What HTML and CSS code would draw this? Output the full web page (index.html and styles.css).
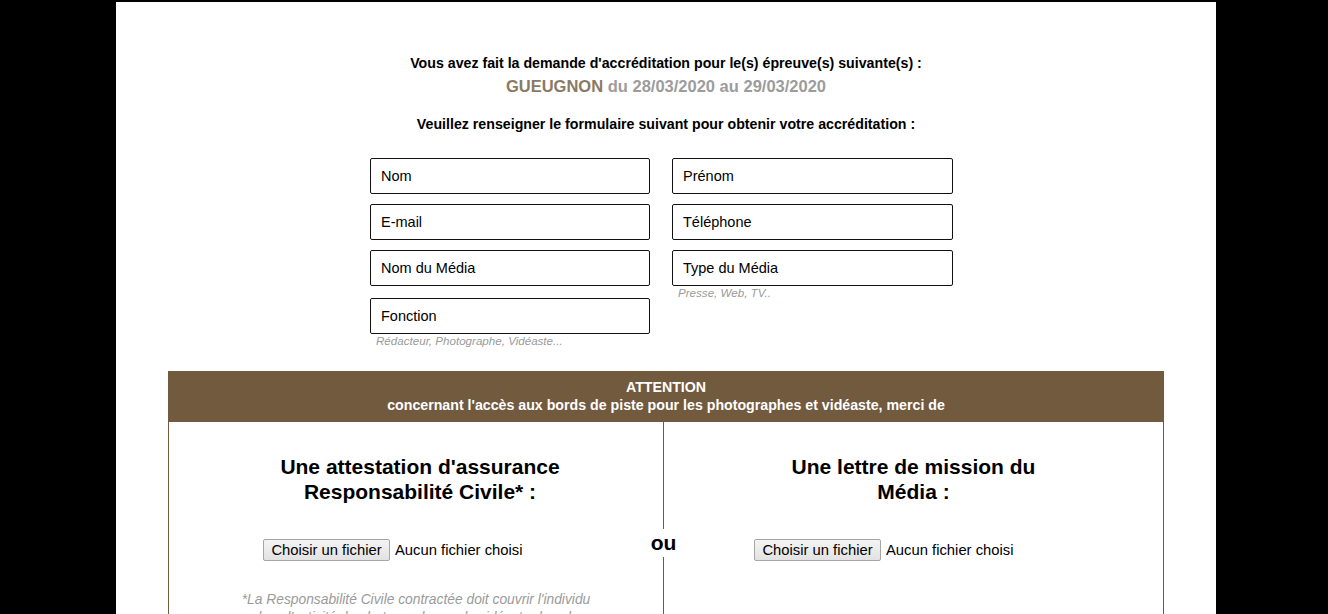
FILE: index.html
```html
<!DOCTYPE html>
<html lang="fr">
<head>
<meta charset="utf-8">
<title>Accréditation</title>
<link rel="stylesheet" href="styles.css">
</head>
<body>
<div class="panel">
  <div class="intro">
    <p class="intro-line">Vous avez fait la demande d'accréditation pour le(s) épreuve(s) suivante(s) :</p>
    <p class="event"><span class="event-name">GUEUGNON</span> du 28/03/2020 au 29/03/2020</p>
    <p class="intro-line intro-second">Veuillez renseigner le formulaire suivant pour obtenir votre accréditation :</p>
  </div>

  <form class="form-grid">
    <div class="field"><input class="text-input" type="text" placeholder="Nom"></div>
    <div class="field"><input class="text-input" type="text" placeholder="Prénom"></div>
    <div class="field"><input class="text-input" type="text" placeholder="E-mail"></div>
    <div class="field"><input class="text-input" type="text" placeholder="Téléphone"></div>
    <div class="field"><input class="text-input" type="text" placeholder="Nom du Média"></div>
    <div class="field"><input class="text-input" type="text" placeholder="Type du Média"><div class="hint">Presse, Web, TV..</div></div>
    <div class="field"><input class="text-input" type="text" placeholder="Fonction"><div class="hint">Rédacteur, Photographe, Vidéaste...</div></div>
  </form>

  <div class="notice">
    <div class="notice-head">
      <div>ATTENTION</div>
      <div>concernant l'accès aux bords de piste pour les photographes et vidéaste, merci de</div>
    </div>
    <div class="notice-body">
      <div class="doc-col doc-col-left">
        <h2 class="doc-title">Une attestation d'assurance Responsabilité Civile* :</h2>
        <div class="file-row">
          <div class="file-ctrl"><span class="file-btn">Choisir un fichier</span><span class="file-name">Aucun fichier choisi</span></div>
        </div>
        <p class="doc-note">*La Responsabilité Civile contractée doit couvrir l'individu dans l'activité de photographe ou de vidéaste dans le cadre de l'épreuve.</p>
      </div>
      <div class="divider">
        <div class="divider-line divider-top"></div>
        <div class="divider-or">ou</div>
        <div class="divider-line divider-bottom"></div>
      </div>
      <div class="doc-col">
        <h2 class="doc-title">Une lettre de mission du Média :</h2>
        <div class="file-row file-row-right">
          <div class="file-ctrl"><span class="file-btn">Choisir un fichier</span><span class="file-name">Aucun fichier choisi</span></div>
        </div>
      </div>
    </div>
  </div>
</div>
</body>
</html>
```

FILE: styles.css
```css
html, body {
  margin: 0;
  padding: 0;
  background: #000;
}
body {
  font-family: "Liberation Sans", Arial, sans-serif;
  color: #000;
  overflow: hidden;
}
.panel {
  background: #fff;
  width: 1100px;
  margin: 2px 0 0 116px;
  min-height: 700px;
  padding-top: 51px;
  box-sizing: border-box;
}
.intro {
  text-align: center;
}
.intro p {
  margin: 0;
}
.intro-line {
  font-size: 14.2px;
  font-weight: 700;
  line-height: 20px;
}
.event {
  font-size: 16.5px;
  font-weight: 700;
  line-height: 20px;
  margin-top: 3px !important;
  color: #9c9c9c;
}
.event-name {
  color: #8a7a64;
}
.intro-second {
  margin-top: 18px !important;
}
.form-grid {
  display: grid;
  grid-template-columns: 280px 281px;
  column-gap: 22px;
  row-gap: 10px;
  margin: 24px 0 0 254px;
  width: 583px;
}
.field {
  display: flex;
  flex-direction: column;
}
.text-input {
  height: 36px;
  box-sizing: border-box;
  border: 1px solid #111;
  border-radius: 2px;
  padding: 0 10px;
  font-family: "Liberation Sans", Arial, sans-serif;
  font-size: 14.5px;
  color: #000;
  background: #fff;
  outline: none;
}
.text-input::placeholder {
  color: #000;
  opacity: 1;
}
.hint {
  font-size: 11.6px;
  font-style: italic;
  color: #9a9a9a;
  line-height: 12px;
  padding: 1px 0 0 6px;
  margin-bottom: -11px;
}
.notice {
  width: 996px;
  margin: 35px auto 0;
}
.notice-head {
  background: #725a3f;
  color: #fff;
  font-size: 14.2px;
  font-weight: 700;
  line-height: 18px;
  text-align: center;
  padding: 7px 0 8px;
}
.notice-body {
  display: grid;
  grid-template-columns: 494px 1px 1fr;
  border-left: 1px solid #725a3f;
  border-right: 1px solid #725a3f;
  min-height: 260px;
}
.doc-col {
  display: flex;
  flex-direction: column;
  align-items: center;
  padding-top: 32px;
}
.doc-col-left {
  padding-left: 8px;
}
.doc-title {
  margin: 0;
  font-size: 21px;
  font-weight: 700;
  line-height: 25px;
  text-align: center;
  max-width: 295px;
}
.file-row {
  margin-top: 35px;
  width: 306px;
}
.doc-col-left .file-row {
  margin-right: 8px;
}
.file-row-right {
  width: 319px;
}
.file-ctrl {
  display: flex;
  align-items: center;
  height: 22px;
  font-family: "Liberation Sans", Arial, sans-serif;
  font-size: 14.8px;
}
.file-btn {
  height: 22px;
  box-sizing: border-box;
  width: 127px;
  display: flex;
  align-items: center;
  justify-content: center;
  border: 1px solid #a6a6a6;
  border-radius: 2px;
  background: linear-gradient(#f4f4f4, #e2e2e2);
  color: #000;
}
.file-name {
  margin-left: 5px;
  color: #000;
}
.doc-note {
  margin: 30px 8px 0 0;
  font-size: 13.8px;
  font-style: italic;
  line-height: 18px;
  color: #9a9a9a;
  text-align: center;
  max-width: 358px;
}
.divider {
  display: flex;
  flex-direction: column;
  align-items: center;
}
.divider-line {
  width: 1px;
  background: #725a3f;
}
.divider-top {
  height: 107px;
}
.divider-bottom {
  flex: 1;
}
.divider-or {
  white-space: nowrap;
  font-size: 21px;
  font-weight: 700;
  line-height: 28px;
  padding: 0 4px;
}
```
